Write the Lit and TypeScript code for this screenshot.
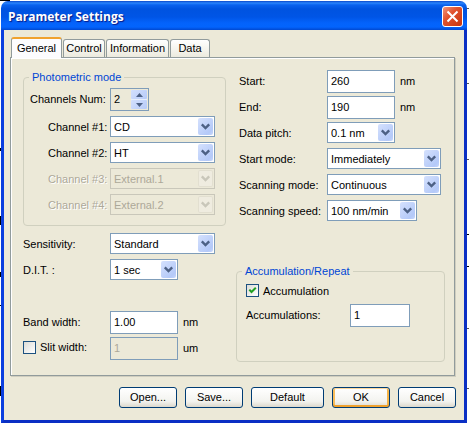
import { LitElement, html, css, svg, nothing } from "lit";
import { customElement, property } from "lit/decorators.js";

const controls = css`
  * {
    box-sizing: border-box;
  }
  button,
  input,
  select {
    font: inherit;
    color: inherit;
    margin: 0;
    border-radius: 0;
    appearance: none;
    outline: none;
  }
`;

@customElement("xp-select")
class XpSelect extends LitElement {
  @property() name = "";
  @property() value = "";
  @property() label = "";
  @property({ type: Boolean, reflect: true }) disabled = false;

  static styles = [
    controls,
    css`
      :host {
        display: block;
        position: relative;
        height: 21px;
      }
      .select {
        display: block;
        width: 100%;
        height: 21px;
        padding: 2px 18px 0 3px;
        border: 1px solid #7f9db9;
        background: #fff;
        line-height: 17px;
      }
      .select:disabled {
        border-color: #c9c7ba;
        background: #ece9d8;
        color: #aca899;
        opacity: 1;
      }
      .arrow {
        position: absolute;
        top: 2px;
        right: 2px;
        width: 15px;
        height: 17px;
        border-radius: 2px;
        background: linear-gradient(135deg, #d5e1fd, #b4c9f8 80%, #c6d6fb);
        pointer-events: none;
      }
      .glyph {
        fill: none;
        stroke: #4d6185;
        stroke-width: 2.4;
      }
      :host([disabled]) .arrow {
        background: #efece0;
        box-shadow: inset 0 0 0 1px #e2dfd0;
      }
      :host([disabled]) .glyph {
        stroke: #c9c7ba;
      }
    `,
  ];

  render() {
    return html`
      <select class="select" name=${this.name} aria-label=${this.label} ?disabled=${this.disabled}>
        <option>${this.value}</option>
      </select>
      <svg class="arrow" viewBox="0 0 15 17" aria-hidden="true">
        <path class="glyph" d="M3.8 6.4 7.5 10 11.2 6.4" />
      </svg>
    `;
  }
}

@customElement("app-root")
class AppRoot extends LitElement {
  static styles = [
    controls,
    css`
      :host {
        display: block;
        padding: 1px 2px 0 1px;
        font: 11px/23px "Liberation Sans", Arial, sans-serif;
        white-space: nowrap;
        color: #000;
        background:
          linear-gradient(#000, #000) 0 0 / 10px 1px,
          linear-gradient(#000, #000) 0 148px / 1px 3px,
          linear-gradient(#000, #000) 0 216px / 1px 9px,
          linear-gradient(#000, #000) 0 272px / 1px 5px,
          linear-gradient(#000, #000) 0 305px / 1px 1px,
          linear-gradient(#000, #000) 0 386px / 1px 10px,
          linear-gradient(#555, #555) 100% 8px / 2px 1px,
          linear-gradient(#555, #555) 100% 83px / 2px 1px,
          linear-gradient(#555, #555) 100% 159px / 2px 1px,
          linear-gradient(#000, #000) 100% 234px / 2px 1px,
          linear-gradient(#000, #000) 100% 266px / 2px 1px,
          linear-gradient(#555, #555) 100% 328px / 2px 1px,
          linear-gradient(#555, #555) 100% 388px / 2px 1px,
          #fff;
        background-repeat: no-repeat;
      }
      .titlebar {
        display: flex;
        align-items: center;
        justify-content: space-between;
        height: 29px;
        padding: 1px 4px 0 7px;
        border-radius: 7px 7px 0 0;
        background: linear-gradient(
          #0a46c8 0,
          #2a85fc 2px,
          #0a62ee 4px,
          #0053e0 8px,
          #0055e6 16px,
          #0463fb 22px,
          #0364fd 26px,
          #0148d0 29px
        );
      }
      .title {
        margin: 0;
        padding-top: 2px;
        font: bold 12px/20px "Open Sans", sans-serif;
        color: #fff;
        text-shadow: 1px 1px 1px #0a1883;
      }
      .close {
        display: grid;
        place-items: center;
        width: 21px;
        height: 21px;
        padding: 0;
        border: 1px solid #fff;
        border-radius: 3px;
        background: linear-gradient(135deg, #f0957c, #e0522e 40%, #c8350e);
      }
      .cross {
        stroke: #fff;
        stroke-width: 2;
      }
      .body {
        padding: 7px 8px 12px 6px;
        border: 3px solid #0b3fdf;
        border-top: 0;
        border-right-color: #0a2fc4;
        border-bottom-color: #0a2fc4;
        background: #ece9d8;
      }
      .tabs {
        display: flex;
        align-items: flex-end;
        gap: 1px;
        padding-left: 1px;
      }
      .tab {
        height: 18px;
        padding: 0;
        border: 1px solid #919b9c;
        border-bottom: 0;
        border-radius: 3px 3px 0 0;
        background: linear-gradient(#fff, #f4f3ec 60%, #eceade);
        line-height: 17px;
        text-align: center;
      }
      .tab.active {
        position: relative;
        height: 21px;
        margin-bottom: -1px;
        border-top: 2px solid #f0a22e;
        background: #fcfcfe;
      }
      .w-general { width: 51px; }
      .w-control { width: 42px; }
      .w-information { width: 63px; }
      .w-data { width: 40px; }
      .panel {
        display: grid;
        grid-template-columns: 203fr 209fr;
        gap: 10px;
        margin-right: 1px;
        padding: 12px 9px 12px 12px;
        border: 1px solid #919b9c;
        box-shadow: inset 1px 1px #fff, 1px 1px #d0cebf;
      }
      .group {
        min-width: 0;
        margin: 0;
        padding: 4px 6px 5px;
        border: 1px solid #d0d0bf;
        border-radius: 4px;
      }
      .legend {
        margin-left: -1px;
        padding: 0 3px;
        line-height: 14px;
        color: #0046d5;
      }
      .repeat {
        margin-top: 38px;
        padding: 6px 9px 31px;
      }
      .repeat .legend {
        margin-left: -4px;
      }
      .row {
        display: flex;
        align-items: flex-start;
        height: 26px;
      }
      .row.first {
        height: 28px;
      }
      .label {
        flex: none;
        width: 87px;
      }
      .group .label {
        width: 80px;
      }
      .group .label.sub {
        padding-left: 18px;
      }
      .right .label {
        width: 88px;
      }
      .right .group .label {
        width: 104px;
      }
      .right > .row {
        padding-left: 3px;
      }
      .label.off {
        color: #aca899;
        text-shadow: 1px 1px #fff;
      }
      .gap-s { margin-top: 7px; }
      .gap-l { margin-top: 26px; }
      .w68 { width: 68px; }
      .w90 { width: 90px; }
      .w105 { width: 105px; }
      .w114 { width: 114px; }
      .w60 { width: 60px; }
      .input {
        height: 23px;
        padding: 0 3px 1px;
        border: 1px solid #7f9db9;
        background: #fff;
        line-height: 20px;
      }
      .input:disabled {
        background: #ece9d8;
        color: #aca899;
      }
      .unit {
        padding-left: 5px;
      }
      .spin {
        display: flex;
        width: 39px;
        height: 23px;
        padding: 1px;
        border: 1px solid #7f9db9;
      }
      .number {
        flex: 1;
        min-width: 0;
        padding: 0 2px 1px;
        border: 0;
        background: none;
        line-height: 18px;
      }
      .steps {
        display: grid;
        gap: 1px;
        width: 16px;
        background: #e6eefc;
      }
      .step {
        display: grid;
        place-items: center;
        padding: 0;
        border: 0;
        border-radius: 1px;
        background: linear-gradient(135deg, #d3e0fd, #b7cbf8);
      }
      .tri {
        fill: #4d6185;
      }
      .check {
        display: flex;
        align-items: flex-start;
        height: 20px;
        line-height: 14px;
      }
      .tick {
        position: relative;
        flex: none;
        display: grid;
        place-items: center;
        width: 13px;
        height: 13px;
      }
      .box {
        grid-area: 1 / 1;
        width: 13px;
        height: 13px;
        border: 1px solid #1c5180;
        background: linear-gradient(135deg, #dcdcd7, #fff);
      }
      .mark {
        grid-area: 1 / 1;
        z-index: 1;
        fill: none;
        stroke: #21a121;
        stroke-width: 2;
        pointer-events: none;
      }
      .checktext {
        padding-left: 4px;
      }
      .slit {
        display: flex;
        align-items: center;
        height: 21px;
      }
      .footer {
        display: flex;
        justify-content: flex-end;
        gap: 8px;
        margin-top: 11px;
      }
      .btn {
        width: 58px;
        height: 21px;
        padding: 0;
        border: 1px solid #003c74;
        border-radius: 3px;
        background: linear-gradient(#fff, #f3f3ef 70%, #dcd8cc);
        line-height: 19px;
        text-align: center;
      }
      .btn.wide {
        width: 73px;
      }
      .btn.primary {
        box-shadow: inset 0 1px #fdd79b, inset 0 -2px #eea12e, inset 2px 0 #f8bd5c, inset -2px 0 #f5b54a;
      }
    `,
  ];

  private channel(n: number, value: string, disabled = false) {
    const label = `Channel #${n}:`;
    return html`<div class="row">
      <span class="label sub ${disabled ? "off" : ""}">${label}</span>
      <xp-select class="w105" label=${label} value=${value} ?disabled=${disabled}></xp-select>
    </div>`;
  }

  private choice(label: string, value: string, width: string, gap = "") {
    return html`<div class="row ${gap}">
      <span class="label">${label}</span>
      <xp-select class=${width} label=${label} value=${value}></xp-select>
    </div>`;
  }

  private field(id: string, label: string, value: string, unit: string, width = "w68", gap = "") {
    return html`<div class="row ${gap}">
      <label class="label" for=${id}>${label}</label>
      <input class="input ${width}" id=${id} .value=${value} />
      ${unit ? html`<span class="unit">${unit}</span>` : nothing}
    </div>`;
  }

  private tick(id: string, checked: boolean) {
    return html`<span class="tick">
      <input class="box" type="checkbox" id=${id} ?checked=${checked} />
      ${checked
        ? html`<svg class="mark" width="13" height="13" viewBox="0 0 13 13" aria-hidden="true">
            ${svg`<path d="M3.3 5.6 5.5 8 9.8 3.7" />`}
          </svg>`
        : nothing}
    </span>`;
  }

  render() {
    return html`
      <header class="titlebar">
        <h1 class="title">Parameter Settings</h1>
        <button class="close" aria-label="Close">
          <svg width="13" height="13" viewBox="0 0 13 13"><path class="cross" d="M1.5 1.5 11.5 11.5M11.5 1.5 1.5 11.5" /></svg>
        </button>
      </header>
      <main class="body">
        <nav class="tabs" role="tablist">
          <button class="tab w-general active" role="tab" aria-selected="true">General</button>
          <button class="tab w-control" role="tab">Control</button>
          <button class="tab w-information" role="tab">Information</button>
          <button class="tab w-data" role="tab">Data</button>
        </nav>
        <section class="panel">
          <div class="left">
            <fieldset class="group">
              <legend class="legend">Photometric mode</legend>
              <div class="row first">
                <label class="label" for="channels">Channels Num:</label>
                <span class="spin">
                  <input class="number" id="channels" value="2" />
                  <span class="steps">
                    <button class="step" aria-label="Increase">
                      <svg width="7" height="4" viewBox="0 0 7 4"><path class="tri" d="M0 4 3.5 0 7 4z" /></svg>
                    </button>
                    <button class="step" aria-label="Decrease">
                      <svg width="7" height="4" viewBox="0 0 7 4"><path class="tri" d="M0 0 3.5 4 7 0z" /></svg>
                    </button>
                  </span>
                </span>
              </div>
              ${this.channel(1, "CD")} ${this.channel(2, "HT")}
              ${this.channel(3, "External.1", true)} ${this.channel(4, "External.2", true)}
            </fieldset>
            ${this.choice("Sensitivity:", "Standard", "w105", "gap-s")}
            ${this.choice("D.I.T. :", "1 sec", "w68")}
            ${this.field("band", "Band width:", "1.00", "nm", "w68", "gap-l")}
            <div class="row">
              <div class="label slit">
                ${this.tick("slit", false)}
                <label class="checktext" for="slit">Slit width:</label>
              </div>
              <input class="input w68" aria-label="Slit width" value="1" disabled />
              <span class="unit">um</span>
            </div>
          </div>
          <div class="right">
            ${this.field("start", "Start:", "260", "nm")}
            ${this.field("end", "End:", "190", "nm")}
            ${this.choice("Data pitch:", "0.1 nm", "w68")}
            ${this.choice("Start mode:", "Immediately", "w114")}
            ${this.choice("Scanning mode:", "Continuous", "w114")}
            ${this.choice("Scanning speed:", "100 nm/min", "w90")}
            <fieldset class="group repeat">
              <legend class="legend">Accumulation/Repeat</legend>
              <div class="check">
                ${this.tick("accumulation", true)}
                <label class="checktext" for="accumulation">Accumulation</label>
              </div>
              ${this.field("count", "Accumulations:", "1", "", "w60")}
            </fieldset>
          </div>
        </section>
        <footer class="footer">
          <button class="btn">Open...</button>
          <button class="btn">Save...</button>
          <button class="btn wide">Default</button>
          <button class="btn primary">OK</button>
          <button class="btn">Cancel</button>
        </footer>
      </main>
    `;
  }
}
